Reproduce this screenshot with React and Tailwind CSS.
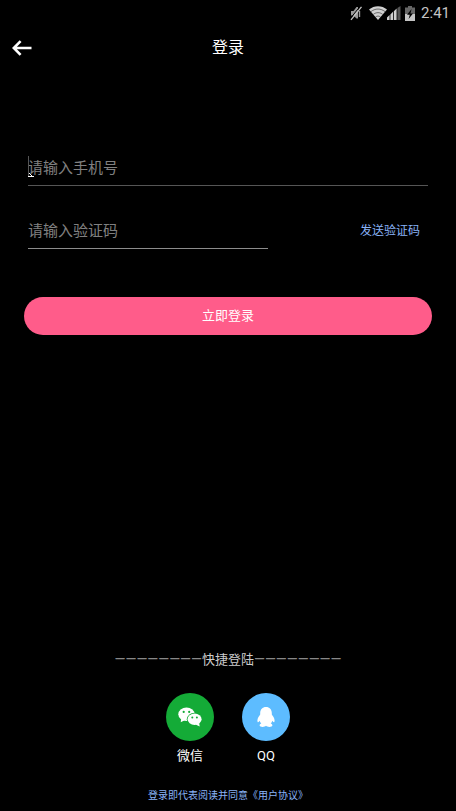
import React, { useState } from "react";

// status bar glyphs: muted bell, wifi, signal, charging battery
function StatusBar() {
  return (
    <div className="flex h-[26px] items-center justify-end pr-1.5 text-[#c4c4c4]">
      <svg width="14" height="16" viewBox="0 0 14 16" className="mr-1.5" aria-hidden="true">
        <path d="M2 6h2.500L7.500 2H9v11.500H7.500L4.500 10.500H2z" fill="#9a9a9a" />
        <path d="M10.500 6v6" stroke="#9a9a9a" strokeWidth="1.400" />
        <path d="M11.600 .8L1.200 13.600" stroke="#000" strokeWidth="1" />
        <path d="M12.500 1.800L2 14.800" stroke="#c4c4c4" strokeWidth="1.300" />
      </svg>
      <svg width="18" height="14" viewBox="0 0 18 14" aria-hidden="true">
        <path d="M9 14L0 3.600C5-.9 13-.9 18 3.600z" fill="#d0d0d0" />
        <path d="M2 5.600c4.200-3.400 9.800-3.400 14 0M4.400 8.300c2.800-2.200 6.400-2.200 9.200 0M6.600 10.900c1.500-1.100 3.300-1.100 4.800 0" fill="none" stroke="#000" strokeWidth=".5" />
      </svg>
      <svg width="14" height="14" viewBox="0 0 14 14" aria-hidden="true">
        <path d="M0 14v-2.500L2.600 9v5zM3.400 14V8.400L6 5.800V14zM6.800 14V5.200l2.800-2.600V14z" fill="#d0d0d0" />
        <path d="M10.400 14V2L13.500 0v14z" fill="#555" />
      </svg>
      <svg width="10" height="15" viewBox="0 0 10 15" className="ml-1 mr-1.5" aria-hidden="true">
        <path d="M3 0h4v1.500h3V8H0V1.500h3z" fill="#666" />
        <path d="M0 8h10v7H0z" fill="#c4c4c4" />
        <path d="M6.600 3L2 8.800h2.800L3.600 13 8 7.400H5.400z" fill="#000" />
      </svg>
      <span className="text-[15px] leading-6">2:41</span>
    </div>
  );
}

function BackIcon() {
  return (
    <svg width="20" height="16" viewBox="0 0 20 16" fill="none" stroke="#fff" strokeWidth="2.600" aria-hidden="true">
      <path d="M2 8h17.500M8.600 1.200L1.800 8l6.800 6.800" />
    </svg>
  );
}

function WechatIcon() {
  return (
    <svg width="24" height="20" viewBox="0 0 24 20" aria-hidden="true">
      <ellipse cx="8.500" cy="7.200" rx="8.200" ry="6.700" fill="#fff" />
      <path d="M3.200 11.500l-.5 3.700 4-2z" fill="#fff" />
      <ellipse cx="16.600" cy="12.300" rx="7.800" ry="6.500" fill="#14ab37" />
      <ellipse cx="16.600" cy="12.300" rx="7" ry="5.700" fill="#fff" />
      <path d="M17.500 17.500l4.200 2-.6-3.400z" fill="#fff" />
      <g fill="#14ab37">
        <circle cx="5.700" cy="4.900" r="1.100" />
        <circle cx="11.200" cy="4.900" r="1.100" />
        <circle cx="14.300" cy="10.600" r="1" />
        <circle cx="18.900" cy="10.600" r="1" />
      </g>
    </svg>
  );
}

function QQIcon() {
  return (
    <svg width="18" height="20" viewBox="0 0 18 20" aria-hidden="true">
      <path
        d="M9 0C5.500 0 3.200 2.600 3.200 6v1.600C2.300 9 .4 11.200.4 13.400c0 1 .3 1.800.7 1.800.5 0 1.100-.7 1.500-1.400.3 1.100.9 2 1.700 2.800-1 .4-1.700.9-1.700 1.700C2.600 19.400 4 20 5.600 20c1.500 0 2.700-.5 3.400-1.200.7.7 1.900 1.200 3.400 1.200 1.600 0 3-.6 3-1.700 0-.8-.7-1.300-1.700-1.700.8-.8 1.400-1.700 1.700-2.800.4.7 1 1.400 1.500 1.400.4 0 .7-.8.7-1.800 0-2.200-1.900-4.400-2.800-5.800V6C14.800 2.600 12.500 0 9 0z"
        fill="#fff"
      />
    </svg>
  );
}

const inputClass =
  "block h-9 bg-transparent border-b text-[15px] leading-5 text-white placeholder:text-[#808080] placeholder:opacity-100 outline-none";

export default function App() {
  const [phone, setPhone] = useState("");
  const [code, setCode] = useState("");

  return (
    <div className="flex min-h-screen flex-col bg-black text-white font-[Roboto,'Noto_Sans_CJK_SC',sans-serif]">
      <StatusBar />

      <header className="grid h-11 grid-cols-3 items-center px-3">
        <button type="button" aria-label="返回" className="justify-self-start">
          <BackIcon />
        </button>
        <h1 className="text-center text-base leading-6">登录</h1>
      </header>

      <form className="px-6 pt-20" onSubmit={(e) => e.preventDefault()}>
        <div className="px-1">
          <div className="relative">
            <input
              type="tel"
              aria-label="手机号"
              value={phone}
              onChange={(e) => setPhone(e.target.value)}
              placeholder="请输入手机号"
              className={`${inputClass} w-full border-[#555555]`}
            />
            {/* text caret */}
            <svg width="6" height="22" viewBox="0 0 6 22" className="absolute left-0 top-1.5" aria-hidden="true">
              <path d="M.5 0v20" stroke="#555" />
              <path d="M0 20.500h6M1 17l3 3" stroke="#fff" />
            </svg>
          </div>

          <div className="mt-[27px] flex items-center justify-between">
            <input
              type="text"
              aria-label="验证码"
              value={code}
              onChange={(e) => setCode(e.target.value)}
              placeholder="请输入验证码"
              className={`${inputClass} w-3/5 border-[#8c8c8c]`}
            />
            <button type="button" className="px-2 text-xs leading-5 text-[#8ab4f8]">
              发送验证码
            </button>
          </div>
        </div>

        <button type="submit" className="mt-12 h-[38px] w-full rounded-full bg-[#ff5c8a] text-[13px] leading-5">
          立即登录
        </button>
      </form>

      <footer className="mt-auto flex flex-col items-center pb-[5px]">
        <p className="text-[13px] leading-5 text-[#cccccc]">
          <span className="text-sm leading-5 text-[#888888]">————————</span>快捷登陆<span className="text-sm leading-5 text-[#888888]">————————</span>
        </p>
        <div className="mt-[23px] flex gap-7">
          <button type="button" className="flex flex-col items-center text-[13px] leading-5">
            <span className="mb-[5px] flex size-12 items-center justify-center rounded-full bg-[#14ab37]">
              <WechatIcon />
            </span>
            微信
          </button>
          <button type="button" className="flex flex-col items-center text-[13px] leading-5">
            <span className="mb-[5px] flex size-12 items-center justify-center rounded-full bg-[#5dbcff]">
              <QQIcon />
            </span>
            QQ
          </button>
        </div>
        <a href="#agreement" className="mt-5 text-[10px] leading-5 text-[#8ab4f8]">
          登录即代表阅读并同意《用户协议》
        </a>
      </footer>
    </div>
  );
}
